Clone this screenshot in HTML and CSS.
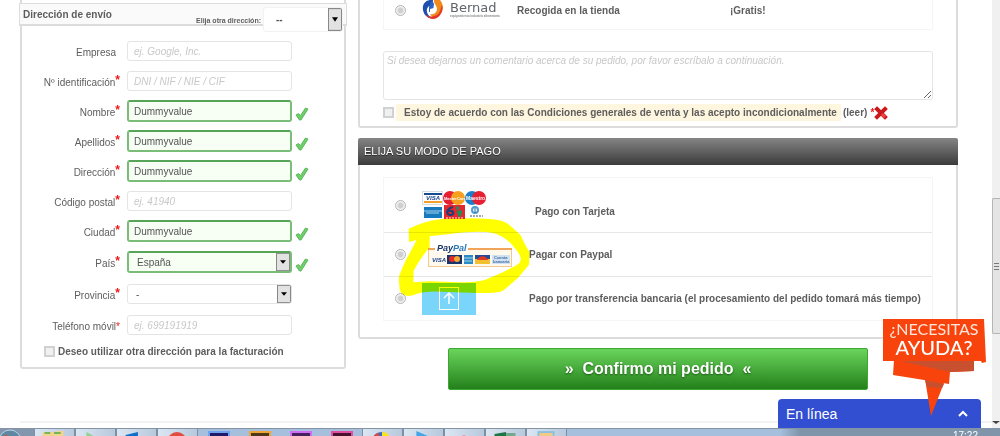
FILE: index.html
```html
<!DOCTYPE html>
<html lang="es">

<head>
  <meta charset="UTF-8">
  <meta name="viewport" content="width=device-width, initial-scale=1">
  <title>Confirmar pedido</title>
  <link rel="stylesheet" href="styles.css">
</head>

<body>

  <svg class="sprite" aria-hidden="true">
    <symbol id="tick" viewBox="0 0 14 14">
      <path d="M1 8 L3.5 6.5 L5.5 8.5 L10.5 1 L13 2 L6 13 L4.5 13 Z" fill="#6fce6b" stroke="#5cba5c" stroke-width="1" stroke-linejoin="round" />
    </symbol>
  </svg>

  <div class="window">
    <main class="page">
      <div class="columns">

        <form class="panel address">
          <div class="address-head">
            <h2>Dirección de envío</h2>
            <label for="other">Elija otra dirección:</label>
            <select id="other"><option>--</option></select>
          </div>

          <div class="fields">
            <div class="field">
              <label class="plain" for="company">Empresa</label>
              <input type="text" id="company" placeholder="ej. Google, Inc.">
            </div>
            <div class="field">
              <label for="dni">Nº identificación<sup>*</sup></label>
              <input type="text" id="dni" placeholder="DNI / NIF / NIE / CIF">
            </div>
            <div class="field valid">
              <label for="firstname">Nombre<sup>*</sup></label>
              <input type="text" id="firstname" value="Dummyvalue">
              <svg class="tick"><use href="#tick" /></svg>
            </div>
            <div class="field valid">
              <label for="lastname">Apellidos<sup>*</sup></label>
              <input type="text" id="lastname" value="Dummyvalue">
              <svg class="tick"><use href="#tick" /></svg>
            </div>
            <div class="field valid">
              <label for="address">Dirección<sup>*</sup></label>
              <input type="text" id="address" value="Dummyvalue">
              <svg class="tick"><use href="#tick" /></svg>
            </div>
            <div class="field">
              <label for="postcode">Código postal<sup>*</sup></label>
              <input type="text" id="postcode" placeholder="ej. 41940">
            </div>
            <div class="field valid">
              <label for="city">Ciudad<sup>*</sup></label>
              <input type="text" id="city" value="Dummyvalue">
              <svg class="tick"><use href="#tick" /></svg>
            </div>
            <div class="field valid tall">
              <label for="country">País<sup>*</sup></label>
              <select id="country"><option>España</option></select>
              <svg class="tick"><use href="#tick" /></svg>
            </div>
            <div class="field tall">
              <label for="state">Provincia<sup>*</sup></label>
              <select id="state"><option>-</option></select>
            </div>
            <div class="field">
              <label for="phone">Teléfono móvil<span class="req">*</span></label>
              <input type="text" id="phone" placeholder="ej. 699191919">
            </div>
          </div>

          <label class="invoice"><input type="checkbox"> Deseo utilizar otra dirección para la facturación</label>
        </form>

        <div class="checkout">
          <section class="panel shipping">
            <label class="carrier">
              <input type="radio" name="carrier">
              <svg class="bernad" viewBox="0 0 82 20">
                <path d="M11 0 C3 -1 0 5 1 10 C2 16 7 19 11 18 C7 17 4 13 5 9 C6 6 8 5 10 7 Z" fill="#1f4fae" />
                <path d="M12 -2 C11 4 15 5 15 9 C15 13 11 15 8 14 C10 18 15 19 18 15 C23 9 21 2 16 -2 Z" fill="#f08a1d" />
                <path d="M3 14 C7 20 14 21 18 15 C20 12 21 9 20 5 C18 10 18 15 12 16 C8 17 5 16 3 14 Z" fill="#e2382b" />
                <path d="M10 0 L12 4 L11 11 L7 12 L7 7 Z" fill="#2b62c4" />
                <path d="M12 8 L13 12 L8 13 L8 9 Z" fill="#fff" />
                <text class="brand" x="28" y="12">Bernad</text>
                <text class="tagline" x="28" y="17">equipamiento industria alimentaria</text>
              </svg>
              <span>Recogida en la tienda</span>
              <span>¡Gratis!</span>
            </label>

            <textarea aria-label="Comentario" placeholder="Si desea dejarnos un comentario acerca de su pedido, por favor escríbalo a continuación."></textarea>

            <div class="terms">
              <input type="checkbox" id="terms">
              <label for="terms">Estoy de acuerdo con las Condiciones generales de venta y las acepto incondicionalmente</label>
              <a href="#">(leer)</a>
              <span class="req">*</span>
              <svg class="cross" viewBox="0 0 14 14">
                <path d="M3 3 L11 11 M11 3 L3 11" stroke="#c8191c" stroke-width="4" stroke-linecap="square" />
                <path d="M8 8 L11 11" stroke="#ee4545" stroke-width="3" />
              </svg>
            </div>
          </section>

          <h2 class="heading">ELIJA SU MODO DE PAGO</h2>
          <section class="panel payment">
            <div class="methods">
              <label class="method cards">
                <input type="radio" name="payment">
                <svg width="65" height="29" viewBox="0 0 65 29">
                  <rect x=".5" y=".5" width="20" height="13" fill="#fff" stroke="#d5dde5" />
                  <rect x="2" y="2" width="18" height="2" fill="#174a91" />
                  <rect x="2" y="10" width="18" height="2" fill="#f2a12c" />
                  <text x="4" y="9" class="visa">VISA</text>
                  <circle cx="28" cy="7" r="7" fill="#e61f33" />
                  <circle cx="36" cy="7" r="7" fill="#f7a01f" />
                  <text x="22" y="9" class="mini">MasterCard</text>
                  <circle cx="50" cy="7" r="7" fill="#1b80c9" />
                  <circle cx="57" cy="7" r="7" fill="#e61f33" />
                  <text x="44" y="9" class="maestro">Maestro</text>
                  <rect x="2" y="16" width="18" height="11" fill="#1579bd" />
                  <path d="M2 20 H20 M4 22 H17" stroke="#a8d4ee" />
                  <rect x="22" y="14" width="21" height="14" fill="#e1272f" />
                  <path d="M31 16 C26 17 24 21 26 23 C28 25 32 24 31 21 C30 19 27 20 27 21" fill="none" stroke="#1c3d78" stroke-width="2" />
                  <path d="M34 17 H37 M35 21 H40 M36 24 H39" stroke="#15915a" stroke-width="3" />
                  <path d="M24 27 H41" stroke="#fff" stroke-dasharray="2 1" />
                  <circle cx="53" cy="19" r="3" fill="#fff" stroke="#4c9cd0" stroke-width="2" />
                  <path d="M53 17 V22" stroke="#27699b" />
                  <path d="M48 25 H61" stroke="#9ba8b5" stroke-width="2" stroke-dasharray="2 1" />
                </svg>
                <span>Pago con Tarjeta</span>
              </label>
              <label class="method paypal">
                <input type="radio" name="payment">
                <svg width="84" height="24" viewBox="0 0 84 24">
                  <rect x=".5" y="5.5" width="83" height="18" fill="#fff8ec" stroke="#f4c98f" />
                  <rect y="5" width="84" height="2" fill="#f1a459" />
                  <rect x="7" y="0" width="33" height="9" fill="#fff" />
                  <text x="9" y="8" class="pp">Pay<tspan>Pal</tspan></text>
                  <text x="4" y="19" class="visa">VISA</text>
                  <rect x="19" y="12" width="15" height="9" fill="#17356c" />
                  <circle cx="24" cy="16" r="3" fill="#e32a26" />
                  <circle cx="29" cy="16" r="3" fill="#f6a52f" />
                  <rect x="36" y="12" width="9" height="9" fill="#2b8bc7" />
                  <path d="M36 15 H45 M36 18 H44" stroke="#a5d6ef" />
                  <rect x="47" y="12" width="15" height="9" fill="#f4c031" />
                  <rect x="47" y="12" width="15" height="4" fill="#254a96" />
                  <path d="M49 17 C51 12 58 12 60 17 Z" fill="#dd3a23" />
                  <rect x="64" y="12" width="18" height="9" fill="#d3e2f1" />
                  <text x="66" y="16" class="account">Cuenta</text>
                  <text x="65" y="20" class="account">bancaria</text>
                </svg>
                <span>Pagar con Paypal</span>
              </label>
              <label class="method">
                <input type="radio" name="payment">
                <svg width="54" height="32" viewBox="0 0 54 32">
                  <rect width="54" height="32" fill="#7ad5fa" />
                  <rect x="17.5" y="4.5" width="19" height="22" fill="none" stroke="#fff" />
                  <path d="M27 21 V11 M22 15 L27 10 L32 15" fill="none" stroke="#fff" stroke-width="1.5" />
                </svg>
                <span>Pago por transferencia bancaria (el procesamiento del pedido tomará más tiempo)</span>
              </label>

              <!-- highlighter ring over the PayPal option -->
              <svg class="marker" viewBox="148 262 393 234">
                <path fill="#ff0" fill-rule="evenodd" d="M177 294 Q225 272 270 266 Q350 260 420 265 Q465 268 480 284 L512 312 Q530 350 540 365 L538 402 L505 442 L460 480 Q440 490 360 486 L280 483 Q215 480 190 494 Q160 502 150 478 L147 440 Q158 410 170 386 L192 345 L200 328 L178 334 Z
                  M240 317 L300 310 Q390 298 430 307 Q470 318 495 352 Q520 378 510 396 Q500 405 455 427 L405 448 Q380 455 330 455 L240 452 L191 455 L192 420 Q205 395 222 372 L240 350 Z" />
              </svg>
            </div>
          </section>

          <button type="button" class="confirm">»&nbsp; Confirmo mi pedido &nbsp;«</button>
        </div>
      </div>
      <hr>
    </main>

    <div class="scrollbar">
      <div class="thumb"></div>
      <div class="arrow"></div>
    </div>

    <button type="button" class="chat">En línea
      <svg width="10" height="7" viewBox="0 0 10 7"><path d="M1 6 L5 2 L9 6" fill="none" stroke="#fff" stroke-width="2" /></svg>
    </button>

    <a class="help" href="#">
      <svg width="103" height="98" viewBox="0 0 103 98">
        <path d="M42 60 L48 97 L61 64 Z M11 41 L10 56 L66 65 L67 53 L91 52 V41 Z" fill="#f8440c" />
        <path d="M17 42 H91 V52 L67 53 Z M42 61 L61 65 L59 69 L44 68 Z" fill="#c9502f" />
        <path d="M0 0 H101 L103 43 L99 44 L98 42 H0 Z" fill="#f8440c" />
        <text x="51" y="16" class="need">¿NECESITAS</text>
        <text x="51" y="36" class="aid">AYUDA?</text>
      </svg>
    </a>
  </div>

  <footer class="taskbar">
    <svg class="orb" viewBox="0 0 34 8"><circle cx="10" cy="12" r="11" fill="#5f87a3" stroke="#bcd3e2" /><circle cx="6" cy="8" r="2" fill="#d9512c" /></svg>
    <svg class="task open" viewBox="0 0 41 8"><path d="M8 3 H22 V2 H30 V8 H8 Z" fill="#f1d58a" /><path d="M10 4 H16 M20 4 H27" stroke="#79b35e" stroke-width="2" /></svg>
    <svg class="task open" viewBox="0 0 41 8"><path d="M11 3 L20 8 H11 Z" fill="#8fd38c" /></svg>
    <svg class="task open" viewBox="0 0 41 8"><path d="M9 6 L22 3 V8 H9 Z" fill="#0f6fc9" /></svg>
    <svg class="task open" viewBox="0 0 41 8"><circle cx="20" cy="13" r="10" fill="#e24d40" /></svg>
    <svg class="task" viewBox="0 0 41 8"><rect x="11" y="3" width="20" height="9" fill="#211a6b" stroke="#6ea2ef" stroke-width="2" /></svg>
    <svg class="task" viewBox="0 0 41 8"><rect x="11" y="3" width="20" height="9" fill="#4f3818" stroke="#f0a431" stroke-width="2" /></svg>
    <svg class="task" viewBox="0 0 41 8"><rect x="11" y="3" width="20" height="9" fill="#47205f" stroke="#cf6cf3" stroke-width="2" /></svg>
    <svg class="task" viewBox="0 0 41 8"><rect x="11" y="3" width="20" height="9" fill="#491130" stroke="#e34d9f" stroke-width="2" /></svg>
    <svg class="task open" viewBox="0 0 41 8"><circle cx="19" cy="12" r="9" fill="#2a6fd6" /><path d="M20 3 Q26 3 28 8 H20 Z" fill="#ffe21c" /><path d="M11 8 Q13 4 17 4 V8 Z" fill="#dc4a38" /></svg>
    <svg class="task open" viewBox="0 0 41 8"><path d="M13 2 L27 8 H13 Z" fill="#43a5e8" /></svg>
    <svg class="task open" viewBox="0 0 41 8"><path d="M15 8 L20 6 L24 8 Z" fill="#e58fa9" /></svg>
    <svg class="task open" viewBox="0 0 41 8"><path d="M9 5 L21 3 V8 H9 Z" fill="#1d7444" /><path d="M21 4 H31 V8 H21 Z" fill="#72a98b" /></svg>
    <svg class="task open" viewBox="0 0 41 8"><rect x="12" y="3" width="16" height="8" fill="#f2c987" stroke="#8cc1de" stroke-width="2" /></svg>
    <span class="clock">17:22</span>
  </footer>

</body>

</html>
```
FILE: styles.css
```css
* {
  box-sizing: border-box;
  margin: 0;
  padding: 0;
}

body {
  display: flex;
  flex-direction: column;
  height: 100vh;
  overflow: hidden;
  font-family: "Liberation Sans", Arial, sans-serif;
  font-size: 10px;
  color: #5d5d5d;
  background: #fff;
}

.sprite {
  display: none;
}

svg {
  display: block;
}

.window {
  position: relative;
  display: flex;
  flex: 1;
  min-height: 0;
}

.page {
  flex: 1;
  overflow: hidden;
}

.columns {
  display: grid;
  grid-template-columns: 326px 1fr;
  gap: 12px;
  align-items: start;
  padding: 0 34px 0 20px;
}

.panel {
  border: 2px solid #dcdcdc;
  border-top: none;
  border-radius: 0 0 3px 3px;
}

input,
select,
textarea {
  font: inherit;
  color: #555;
  background: #fff;
  border: 1px solid #e4e4e4;
  border-radius: 3px;
}

::placeholder {
  color: #c8c8c8;
  font-style: italic;
}

select {
  appearance: none;
  padding-left: 8px;
  background: url("data:image/svg+xml,%3Csvg xmlns='http://www.w3.org/2000/svg' viewBox='0 0 14 20' preserveAspectRatio='none'%3E%3Crect x='.5' y='.5' width='13' height='19' fill='%23e2e2e2' stroke='%23888'/%3E%3Cpath d='M4 8H10L7 12Z' fill='%23000'/%3E%3C/svg%3E") right / 14px 100% no-repeat #fff;
}

input[type="checkbox"],
input[type="radio"] {
  appearance: none;
  flex: none;
  width: 11px;
  height: 11px;
  background: #f0f0f0;
  border: 2px solid #cfd1d3;
  border-radius: 0;
}

input[type="radio"] {
  border: 1px solid #b4b4b4;
  border-radius: 50%;
  background: radial-gradient(#d0d0d0 35%, #f4f4f4 60%);
}

.req,
sup {
  color: #f01818;
}

sup {
  font-size: 12px;
  font-weight: bold;
  line-height: 0;
  vertical-align: 2px;
}

/* Address form */
.address {
  padding-top: 3px;
  padding-bottom: 10px;
}

.address-head {
  display: flex;
  align-items: center;
  height: 23px;
  margin: 0 -3px;
  padding: 0 3px;
  background: #fafafa;
  border: 1px solid #dcdcdc;
  border-bottom-width: 2px;
}

.address-head h2 {
  flex: 1;
  font-size: 10px;
}

.address-head label {
  padding: 12px 2px 0 0;
  font-size: 7px;
  font-weight: bold;
}

.address-head select {
  width: 80px;
  height: 25px;
  margin-top: 10px;
  padding-left: 12px;
  font-weight: bold;
  border-color: #f2f2f2;
}

.fields {
  padding-top: 10px;
}

.field {
  display: grid;
  grid-template-columns: 98px 165px 14px;
  align-items: center;
  height: 30px;
}

.field.tall {
  height: 32px;
}

.field label {
  padding-top: 2px;
  text-align: right;
}

.field label.plain {
  padding-right: 4px;
}

.field input,
.field select {
  width: 165px;
  height: 20px;
  margin-left: 7px;
  padding-left: 6px;
}

.field select {
  padding-left: 8px;
}

.field.valid input,
.field.valid select {
  height: 22px;
  background-color: #f7fff5;
  border: 2px solid #79bd79;
  border-top-color: #56a556;
}

.field.valid input {
  padding-left: 5px;
}

.tick {
  width: 14px;
  height: 14px;
  margin: 5px 0 0 10px;
}

.invoice {
  display: flex;
  gap: 3px;
  align-items: center;
  padding: 6px 0 0 22px;
  font-weight: bold;
}

/* Shipping */
.shipping {
  padding: 0 23px 5px;
}

.carrier {
  display: grid;
  grid-template-columns: 27px 95px 213px 1fr;
  align-items: center;
  height: 30px;
  padding: 0 0 12px 11px;
  font-weight: bold;
  border: 1px solid #f5f5f5;
  border-top: none;
}

.bernad {
  width: 82px;
  height: 20px;
}

.brand {
  font: 13px "DejaVu Sans", sans-serif;
  fill: #606468;
}

.tagline {
  font-size: 3px;
  fill: #8a8a8a;
}

textarea {
  display: block;
  width: 100%;
  height: 49px;
  margin-top: 21px;
  padding: 3px;
}

.terms {
  display: flex;
  align-items: center;
  margin-top: 4px;
  font-weight: bold;
}

.terms label {
  margin: 0 2px;
  padding: 3px 4px 3px 8px;
  background: #fff6df;
}

.terms a {
  margin-right: 3px;
  color: inherit;
  text-decoration: none;
}

.cross {
  width: 14px;
  height: 14px;
}

/* Payment */
.heading {
  margin-top: 10px;
  padding: 7px 6px;
  font-size: 11px;
  font-weight: normal;
  line-height: 13px;
  color: #fff;
  text-shadow: 0 1px 1px #222;
  background: linear-gradient(#858585, #3b3b3b);
  border-radius: 2px 2px 0 0;
}

.payment {
  padding: 12px 23px 16px;
}

.methods {
  position: relative;
  border: 1px solid #f5f5f5;
}

.method {
  display: grid;
  grid-template-columns: 27px 107px 1fr;
  align-items: center;
  height: 44px;
  padding-left: 11px;
  font-weight: bold;
}

.method + .method {
  border-top: 1px solid #e6e6e6;
}

.cards {
  height: 54px;
}

.cards span {
  padding: 12px 0 0 6px;
}

.paypal svg {
  margin-left: 6px;
}

.visa {
  font: italic bold 6px "Liberation Sans", sans-serif;
  fill: #16418c;
}

.mini {
  font-size: 4px;
  fill: #fff;
}

.maestro {
  font: bold 5px "Liberation Sans", sans-serif;
  fill: #fff;
}

.pp {
  font: italic bold 9px "Liberation Sans", sans-serif;
  fill: #1c3668;
}

.pp tspan {
  fill: #2a7ab5;
}

.account {
  font-size: 4px;
  fill: #3c6ca5;
}

.marker {
  position: absolute;
  top: 40px;
  left: 15px;
  width: 131px;
  height: 78px;
  mix-blend-mode: multiply;
  pointer-events: none;
}

.confirm {
  display: block;
  width: 70%;
  margin: 9px auto 0;
  padding: 10px;
  font: bold 16px/20px "Liberation Sans", Arial, sans-serif;
  color: #fff;
  text-shadow: 0 1px 2px #1c5c14;
  background: linear-gradient(#69d45b, #24801b);
  border: 1px solid #3ca832;
  border-radius: 2px;
}

hr {
  margin: 31px 0 0 20px;
  border: none;
  border-top: 2px solid #f2f2f2;
}

/* Window chrome */
.scrollbar {
  display: flex;
  flex-direction: column;
  justify-content: space-between;
  width: 8px;
  padding: 198px 0 4px;
  background: #f0f0f0;
}

.thumb {
  height: 136px;
  border: 1px solid #b5b5b5;
  border-right: none;
  border-radius: 2px 0 0 2px;
  background: linear-gradient(#777, #777) center 64px / 5px 1px no-repeat,
    linear-gradient(#777, #777) center 67px / 5px 1px no-repeat,
    linear-gradient(#777, #777) center 70px / 5px 1px no-repeat, #e4e4e4;
}

.arrow {
  align-self: flex-end;
  border: 4px solid transparent;
  border-top: 3px solid #444;
  border-bottom: none;
}

.chat {
  position: absolute;
  right: 19px;
  bottom: 0;
  display: flex;
  justify-content: space-between;
  align-items: center;
  width: 203px;
  height: 29px;
  padding: 0 13px 0 8px;
  font: 14px "Liberation Sans", Arial, sans-serif;
  color: #fff;
  background: #324fd2;
  border: none;
  border-radius: 4px 4px 0 0;
}

.help {
  position: absolute;
  right: 14px;
  bottom: 11px;
}

.need,
.aid {
  font-family: Lato, sans-serif;
  font-size: 16px;
  font-weight: 400;
  text-anchor: middle;
  fill: #fff;
}

.need {
  fill: #ffe6dc;
}

.aid {
  font-size: 20px;
  font-weight: 500;
}

.taskbar {
  display: flex;
  height: 8px;
  overflow: hidden;
  background: linear-gradient(90deg, #8297ae 34px, #a5bfdd 35px, #a5bfdd 78%, #8094aa 80%);
  border-top: 1px solid #8494a4;
}

.orb {
  width: 34px;
  height: 8px;
}

.task {
  width: 41px;
  height: 8px;
}

.task.open {
  background: linear-gradient(90deg, #dbe6f2, #b7c9dd);
  border: 1px solid #7d8fa3;
  border-width: 0 1px;
}

.clock {
  margin-left: auto;
  padding: 1px 22px 0 0;
  font-size: 10px;
  color: #fff;
}
```
